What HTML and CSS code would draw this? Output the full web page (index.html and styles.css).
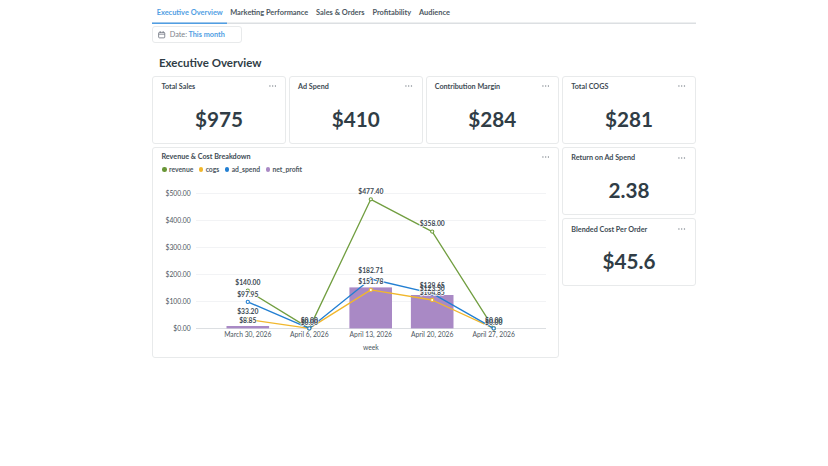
FILE: index.html
```html
<!DOCTYPE html>
<html lang="en">
<head>
    <meta charset="UTF-8">
    <meta name="viewport" content="width=device-width, initial-scale=1.0">
    <title>Executive Overview</title>
    <link rel="stylesheet" href="styles.css">
</head>
<body>
    <div class="dashboard">
        <nav class="tabs">
            <a class="tab active">Executive Overview</a>
            <a class="tab">Marketing Performance</a>
            <a class="tab">Sales &amp; Orders</a>
            <a class="tab">Profitability</a>
            <a class="tab">Audience</a>
        </nav>

        <div class="filter">
            <svg class="calendar" viewBox="0 0 14 14" fill="none" stroke="#696e7b" stroke-width="1.5">
                <rect x="1.2" y="2.6" width="11.6" height="10.4" rx="1.5"/>
                <path d="M1.2 6h11.6M4.2 .4v3.2M9.8 .4v3.2"/>
            </svg>
            <span class="filter-label">Date:</span>
            <span class="filter-value">This month</span>
        </div>

        <h1>Executive Overview</h1>

        <div class="grid">
            <div class="card">
                <div class="card-header"><h2>Total Sales</h2><svg class="dots" viewBox="0 0 8 2"><circle cx="1" cy="1" r=".75"/><circle cx="4" cy="1" r=".75"/><circle cx="7" cy="1" r=".75"/></svg></div>
                <div class="value">$975</div>
            </div>
            <div class="card">
                <div class="card-header"><h2>Ad Spend</h2><svg class="dots" viewBox="0 0 8 2"><circle cx="1" cy="1" r=".75"/><circle cx="4" cy="1" r=".75"/><circle cx="7" cy="1" r=".75"/></svg></div>
                <div class="value">$410</div>
            </div>
            <div class="card">
                <div class="card-header"><h2>Contribution Margin</h2><svg class="dots" viewBox="0 0 8 2"><circle cx="1" cy="1" r=".75"/><circle cx="4" cy="1" r=".75"/><circle cx="7" cy="1" r=".75"/></svg></div>
                <div class="value">$284</div>
            </div>
            <div class="card">
                <div class="card-header"><h2>Total COGS</h2><svg class="dots" viewBox="0 0 8 2"><circle cx="1" cy="1" r=".75"/><circle cx="4" cy="1" r=".75"/><circle cx="7" cy="1" r=".75"/></svg></div>
                <div class="value">$281</div>
            </div>

            <div class="card chart-card">
                <div class="card-header"><h2>Revenue &amp; Cost Breakdown</h2><svg class="dots" viewBox="0 0 8 2"><circle cx="1" cy="1" r=".75"/><circle cx="4" cy="1" r=".75"/><circle cx="7" cy="1" r=".75"/></svg></div>
                <div class="legend">
                    <span class="revenue">revenue</span>
                    <span class="cogs">cogs</span>
                    <span class="ad-spend">ad_spend</span>
                    <span class="net-profit">net_profit</span>
                </div>
                <svg class="chart" viewBox="153 178 405 178">
                    <!-- grid lines -->
                    <path class="grid-line" d="M196 193.5h350M196 220.5h350M196 247.5h350M196 274.5h350M196 301.5h350"/>
                    <path class="axis-line" d="M196 328.5h350"/>

                    <!-- net_profit bars -->
                    <g class="bars">
                        <rect x="226.5" y="326" width="42.6" height="2.4"/>
                        <rect x="349.4" y="287.4" width="42.6" height="41"/>
                        <rect x="410.9" y="295" width="42.6" height="33.4"/>
                    </g>

                    <g class="line green">
                        <polyline points="247.8,290.6 309.3,328.4 370.8,199.3 432.2,231.6 493.7,328.4"/>
                        <circle cx="247.8" cy="290.6" r="1.6"/>
                        <circle cx="309.3" cy="328.4" r="1.6"/>
                        <circle cx="370.8" cy="199.3" r="1.6"/>
                        <circle cx="432.2" cy="231.6" r="1.6"/>
                        <circle cx="493.7" cy="328.4" r="1.6"/>
                    </g>
                    <g class="line yellow">
                        <polyline points="247.8,319.4 309.3,328.4 370.8,289.9 432.2,300 493.7,328.4"/>
                        <circle cx="247.8" cy="319.4" r="1.6"/>
                        <circle cx="309.3" cy="328.4" r="1.6"/>
                        <circle cx="370.8" cy="289.9" r="1.6"/>
                        <circle cx="432.2" cy="300" r="1.6"/>
                        <circle cx="493.7" cy="328.4" r="1.6"/>
                    </g>
                    <g class="line blue">
                        <polyline points="247.8,301.9 309.3,328.4 370.8,279 432.2,293.4 493.7,328.4"/>
                        <circle cx="247.8" cy="301.9" r="1.6"/>
                        <circle cx="309.3" cy="328.4" r="1.6"/>
                        <circle cx="370.8" cy="279" r="1.6"/>
                        <circle cx="432.2" cy="293.4" r="1.6"/>
                        <circle cx="493.7" cy="328.4" r="1.6"/>
                    </g>

                    <g class="labels">
                        <text x="247.8" y="285.3">$140.00</text>
                        <text x="247.8" y="313.8">$33.20</text>
                        <text x="247.8" y="296.8">$97.95</text>
                        <text x="247.8" y="322.6">$8.85</text>
                        <text x="309.3" y="325">$0.00</text>
                        <text class="stacked" x="309.3" y="322.8">$0.00</text>
                        <text x="370.8" y="193.5">$477.40</text>
                        <text x="370.8" y="273.4">$182.71</text>
                        <text x="370.8" y="283.8">$151.78</text>
                        <text x="432.2" y="226.4">$358.00</text>
                        <text x="432.2" y="294.8">$104.85</text>
                        <text x="432.2" y="291.4">$123.50</text>
                        <text class="stacked" x="432.2" y="287.6">$129.65</text>
                        <text x="493.7" y="325">$0.00</text>
                        <text class="stacked" x="493.7" y="322.8">$0.00</text>
                    </g>

                    <g class="axis y-axis">
                        <text x="190.6" y="195.8">$500.00</text>
                        <text x="190.6" y="222.8">$400.00</text>
                        <text x="190.6" y="249.9">$300.00</text>
                        <text x="190.6" y="276.9">$200.00</text>
                        <text x="190.6" y="303.9">$100.00</text>
                        <text x="190.6" y="330.9">$0.00</text>
                    </g>
                    <g class="axis x-axis">
                        <text x="247.8" y="337.1">March 30, 2026</text>
                        <text x="309.3" y="337.1">April 6, 2026</text>
                        <text x="370.8" y="337.1">April 13, 2026</text>
                        <text x="432.2" y="337.1">April 20, 2026</text>
                        <text x="493.7" y="337.1">April 27, 2026</text>
                        <text x="370.8" y="349.8">week</text>
                    </g>
                </svg>
            </div>
            <div class="card">
                <div class="card-header"><h2>Return on Ad Spend</h2><svg class="dots" viewBox="0 0 8 2"><circle cx="1" cy="1" r=".75"/><circle cx="4" cy="1" r=".75"/><circle cx="7" cy="1" r=".75"/></svg></div>
                <div class="value">2.38</div>
            </div>
            <div class="card">
                <div class="card-header"><h2>Blended Cost Per Order</h2><svg class="dots" viewBox="0 0 8 2"><circle cx="1" cy="1" r=".75"/><circle cx="4" cy="1" r=".75"/><circle cx="7" cy="1" r=".75"/></svg></div>
                <div class="value">$45.6</div>
            </div>
        </div>
    </div>
</body>
</html>
```
FILE: styles.css
```css
* {
    box-sizing: border-box;
}

body {
    margin: 0;
    background: #fff;
    color: #303d46;
    font-family: Lato, sans-serif;
}

.dashboard {
    width: 543.5px;
    margin-left: 152.3px;
}

/* Tabs */
.tabs {
    display: flex;
    gap: 7.8px;
    height: 24px;
    box-shadow: inset 0 -1.5px #dcdfe2;
}

.tab {
    height: 24px;
    padding-top: 8px;
    color: #4c5761;
    font-size: 7.42px;
    line-height: 9px;
    font-weight: 700;
    white-space: nowrap;
}

.tab.active {
    padding-left: 4.4px;
    padding-right: 4px;
    margin-right: -4.4px;
    color: #509ee3;
    box-shadow: inset 0 -1.6px #509ee3;
}

/* Date filter */
.filter {
    display: flex;
    align-items: center;
    width: 89.5px;
    height: 17px;
    margin-top: 2.4px;
    padding-left: 5px;
    border: 1px solid #e8eaeb;
    border-radius: 3px;
    font-size: 7.3px;
}

.calendar {
    width: 7.4px;
    height: 7.4px;
    margin-right: 4px;
}

.filter-label {
    margin-right: 1.4px;
    color: #7d838c;
}

.filter-value {
    color: #509ee3;
    font-weight: 700;
}

h1 {
    height: 32.3px;
    margin: 0;
    padding: 11.8px 0 0 6.6px;
    font-size: 11.5px;
    line-height: 16px;
    font-weight: 700;
}

/* Cards */
.grid {
    display: grid;
    grid-template-columns: repeat(4, 1fr);
    grid-template-rows: 68px 68px 68px 68.6px;
    gap: 3.4px 3px;
}

.card {
    border: 1px solid #e8eaeb;
    border-radius: 3px;
}

.chart-card {
    grid-column: span 3;
    grid-row: span 3;
}

.card-header {
    display: flex;
    justify-content: space-between;
    padding: 5.3px 9px 0 8.2px;
}

.chart-card .card-header {
    padding-top: 4.1px;
}

h2 {
    margin: 0;
    color: #404b54;
    font-size: 7.2px;
    line-height: 10px;
    font-weight: 700;
}

.dots {
    width: 7.4px;
    height: 2px;
    margin-top: 3.5px;
    fill: #858c93;
}

.value {
    margin-top: 12.6px;
    text-align: center;
    font-size: 20.7px;
    line-height: 28px;
    font-weight: 700;
}

/* Chart */
.legend {
    display: flex;
    gap: 5.6px;
    height: 12px;
    padding: 2.6px 0 0 9px;
    color: #4c5761;
    font-size: 6.75px;
    line-height: 9px;
    font-weight: 700;
}

.legend span::before {
    content: "";
    display: inline-block;
    width: 4.6px;
    height: 4.6px;
    margin-right: 2.2px;
    border-radius: 50%;
}

.legend .revenue::before { background: #689636; }
.legend .cogs::before { background: #f1b72c; }
.legend .ad-spend::before { background: #227fd2; }
.legend .net-profit::before { background: #a989c5; }

.chart {
    display: block;
    width: 405px;
    height: 178px;
    margin-top: 4.1px;
}

.grid-line {
    stroke: #eceef0;
    stroke-width: 0.7;
}

.axis-line {
    stroke: #dcdfe2;
    stroke-width: 1;
}

.bars {
    fill: #a989c5;
}

.line {
    fill: none;
    stroke-width: 1.3;
    stroke-linejoin: round;
}

.line circle {
    fill: #fff;
    stroke-width: 1.1;
}

.green { stroke: #719e40; }
.yellow { stroke: #f1b72c; }
.blue { stroke: #227fd2; }

.labels text {
    font-size: 6.75px;
    font-weight: 700;
    text-anchor: middle;
    fill: #404b54;
    stroke: #fff;
    stroke-width: 1.4;
    paint-order: stroke;
}

.labels .stacked {
    stroke: none;
}

.axis text {
    font-size: 6.75px;
    fill: #4c5761;
}

.y-axis text {
    text-anchor: end;
}

.x-axis text {
    text-anchor: middle;
}
```
